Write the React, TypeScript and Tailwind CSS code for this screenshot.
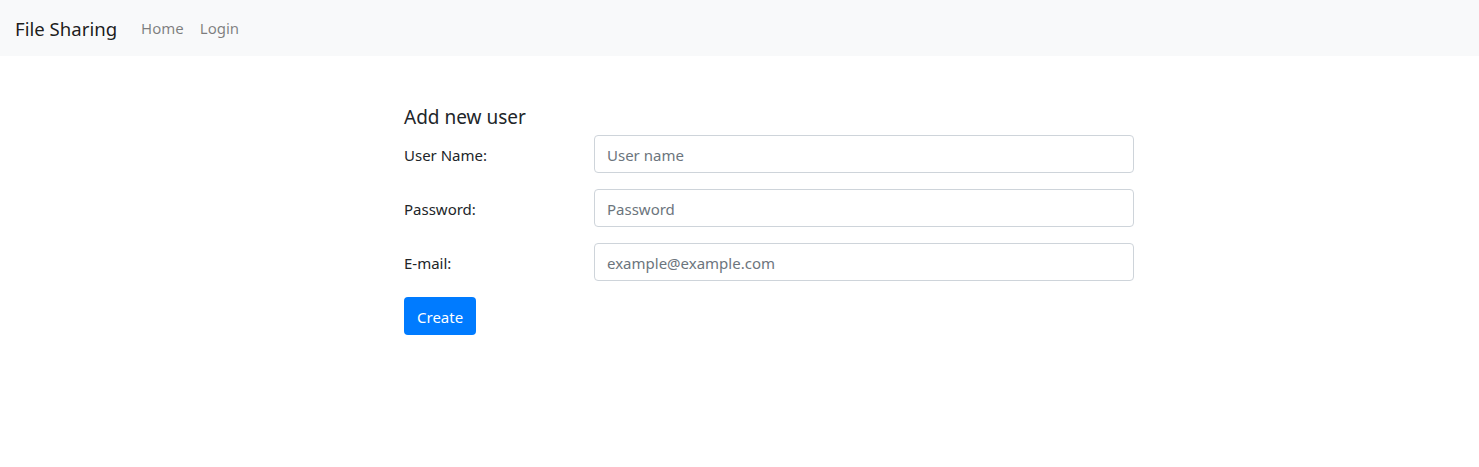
import React from "react";

const font = { fontFamily: '"Segoe UI", "Noto Sans", "Open Sans", sans-serif' };

function Row({ label, placeholder, type }: { label: string; placeholder: string; type: string }) {
  return (
    <div className="flex items-center mb-4">
      <label className="w-[190px] text-[15px] leading-[24px] pt-[2px] text-[#212529]">{label}</label>
      <input
        type={type}
        placeholder={placeholder}
        className="w-[540px] h-[38px] border border-[#ced4da] rounded-[4px] px-3 pt-[2px] text-[15px] text-[#495057] placeholder:text-[#6c757d] bg-white outline-none"
      />
    </div>
  );
}

export default function App() {
  return (
    <div className="min-h-[467px] bg-white" style={font}>
      <nav className="h-[56px] bg-[#f8f9fa] flex items-center px-4">
        <span className="text-[18.6px] leading-[30px] pt-[2px] text-[rgba(0,0,0,0.9)] mr-4 ml-[-1px]">File Sharing</span>
        <a className="px-2 text-[15px] pt-[1px] text-[rgba(0,0,0,0.5)]">Home</a>
        <a className="px-2 text-[15px] pt-[1px] text-[rgba(0,0,0,0.5)]">Login</a>
      </nav>
      <div className="pl-[404px] pt-[48px]">
        <h5 className="text-[19px] leading-[24px] pt-[1px] text-[#212529] mb-[6px]">Add new user</h5>
        <Row label="User Name:" placeholder="User name" type="text" />
        <Row label="Password:" placeholder="Password" type="password" />
        <Row label="E-mail:" placeholder="example@example.com" type="email" />
        <button className="h-[38px] px-[13px] pt-[2px] bg-[#007bff] text-white text-[15px] rounded-[4px]">Create</button>
      </div>
    </div>
  );
}
